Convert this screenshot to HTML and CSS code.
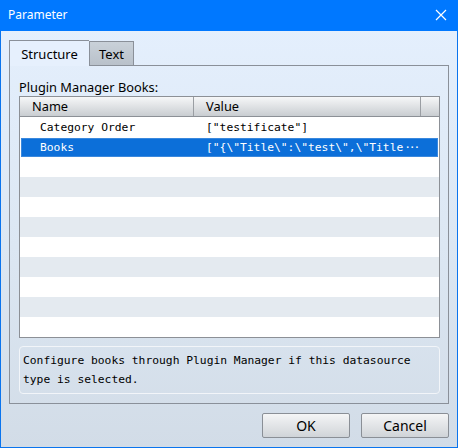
FILE: index.html
```html
<!DOCTYPE html>
<html lang="en">
<head>
    <meta charset="UTF-8">
    <title>Parameter</title>
    <link rel="stylesheet" href="styles.css">
</head>
<body>
    <div id="window">
        <div id="title-bar">
            <span class="title">Parameter</span>
            <svg class="close" width="12" height="12" viewBox="0 0 12 12">
                <path d="M1 1 L11 11 M11 1 L1 11" stroke="#ffffff" stroke-width="1.2" fill="none"/>
            </svg>
        </div>

        <div id="content">
            <div class="tabs">
                <div class="tab active">Structure</div>
                <div class="tab">Text</div>
            </div>

            <div class="tab-panel">
                <div class="list-label">Plugin Manager Books:</div>
                <div class="list-box">
                    <div class="list-header">
                        <div class="col-name">Name</div>
                        <div class="col-value">Value</div>
                        <div class="col-extra"></div>
                    </div>
                    <div class="list-rows">
                        <div class="row">
                            <div class="cell-name">Category Order</div>
                            <div class="cell-value">["testificate"]</div>
                        </div>
                        <div class="row selected">
                            <div class="cell-name">Books</div>
                            <div class="cell-value">["{\"Title\":\"test\",\"Title<span class="dots">···</span></div>
                        </div>
                        <div class="row"></div>
                        <div class="row"></div>
                        <div class="row"></div>
                        <div class="row"></div>
                        <div class="row"></div>
                        <div class="row"></div>
                        <div class="row"></div>
                        <div class="row"></div>
                        <div class="row"></div>
                    </div>
                </div>
                <div class="description">Configure books through Plugin Manager if this datasource
type is selected.</div>
            </div>

            <div class="buttons">
                <button class="btn">OK</button>
                <button class="btn">Cancel</button>
            </div>
        </div>
    </div>
</body>
</html>
```

FILE: styles.css
```css
body {
    margin: 0;
    font-family: "Noto Sans", "DejaVu Sans", sans-serif;
    font-size: 12px;
}

#window {
    width: 458px;
    height: 448px;
    box-sizing: border-box;
    border: 1px solid #0a74ee;
    border-top: none;
    background: linear-gradient(to bottom, #e5f0fe 0%, #dce7f3 55%, #d2dce7 100%);
    display: flex;
    flex-direction: column;
}

#title-bar {
    flex: none;
    height: 31px;
    background: #0078ff;
    color: #ffffff;
    display: flex;
    align-items: center;
    justify-content: space-between;
    padding: 0 11px 0 8px;
    margin: 0 -1px;
}

#title-bar .title {
    font-size: 12px;
    margin-top: -2px;
}

#title-bar .close {
    margin-top: -2px;
}

#content {
    flex: 1;
    display: flex;
    flex-direction: column;
    padding: 9px 8px 9px 8px;
}

.tabs {
    flex: none;
    display: flex;
    align-items: flex-end;
    height: 25px;
    position: relative;
    z-index: 1;
}

.tab {
    box-sizing: border-box;
    height: 24px;
    padding: 0 9px;
    border: 1px solid #8a9099;
    border-bottom: none;
    background: linear-gradient(to bottom, #c9d1d9, #b9c1ca);
    color: #000000;
    font-size: 13px;
    display: flex;
    align-items: center;
}

.tab.active {
    height: 26px;
    margin-bottom: -1px;
    background: #e6f0fd;
    padding: 0 8px;
    width: 80px;
    justify-content: center;
    border-right: none;
}

.tab-panel {
    flex: none;
    box-sizing: border-box;
    height: 339px;
    border: 1px solid #8a9099;
    padding: 13px 8px 9px 9px;
    display: flex;
    flex-direction: column;
}

.list-label {
    flex: none;
    font-size: 12.8px;
    line-height: 16px;
    color: #000000;
    margin-bottom: 1px;
}

.list-box {
    flex: none;
    box-sizing: border-box;
    height: 242px;
    border: 1px solid #8c9096;
    background: #ffffff;
    display: flex;
    flex-direction: column;
}

.list-header {
    display: flex;
    height: 19px;
    border-bottom: 1px solid #8c9096;
    background: linear-gradient(to bottom, #f6f7f8, #c9cdd1);
    font-size: 12.8px;
    line-height: 19px;
}

.col-name {
    width: 174px;
    padding-left: 12px;
    box-sizing: border-box;
    border-right: 1px solid #9a9ea3;
}

.col-value {
    width: 227px;
    padding-left: 12px;
    box-sizing: border-box;
    border-right: 1px solid #9a9ea3;
}

.col-extra {
    flex: 1;
}

.row {
    height: 20px;
    display: flex;
    font-family: "DejaVu Sans Mono", monospace;
    font-size: 11.3px;
    line-height: 21px;
    color: #000000;
}

.row:nth-child(even) {
    background: #e4eaf0;
}

.row.selected {
    background: #0c6fd9;
    color: #ffffff;
    margin: 1px 1px 0 1px;
    height: 17px;
    line-height: 17px;
    border: 1px solid #3a88dd;
}

.cell-name {
    width: 174px;
    padding-left: 20px;
    box-sizing: border-box;
}

.row.selected .cell-name {
    width: 172px;
    padding-left: 18px;
}

.cell-value {
    padding-left: 12px;
    white-space: nowrap;
}

.dots {
    letter-spacing: -2.2px;
    margin-left: 1px;
}

.description {
    flex: none;
    margin-top: 8px;
    box-sizing: border-box;
    height: 48px;
    border: 1px solid #f2f5f9;
    border-radius: 4px;
    padding: 4px 3px;
    font-family: "DejaVu Sans Mono", monospace;
    font-size: 11.3px;
    line-height: 19px;
    white-space: pre;
    color: #000000;
}

.buttons {
    flex: none;
    display: flex;
    justify-content: flex-end;
    gap: 11px;
    margin-top: 9px;
}

.btn {
    width: 88px;
    height: 25px;
    border: 1px solid #8a8f96;
    border-radius: 2px;
    background: linear-gradient(to bottom, #f4f5f6, #d0d4d8);
    font-family: "Noto Sans", "DejaVu Sans", sans-serif;
    font-size: 14px;
    color: #000000;
    padding: 0;
}
```
